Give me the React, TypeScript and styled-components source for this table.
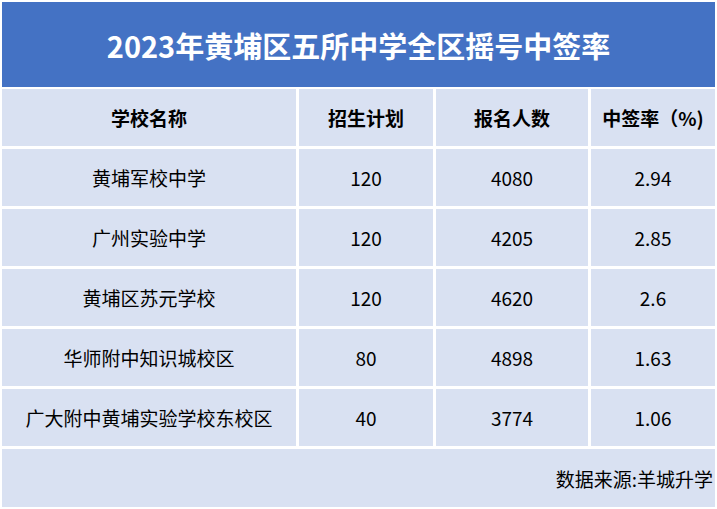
import * as React from "react"
import styled, { createGlobalStyle } from "styled-components"

const GlobalStyles = createGlobalStyle`
  html, body {
    margin: 0;
    padding: 0;
    background: #ffffff;
  }
  body {
    font-family: "Microsoft YaHei", "Noto Sans CJK SC", "Noto Sans", sans-serif;
  }
`

const Sheet = styled.main`
  width: 717px;
  height: 509px;
  box-sizing: border-box;
  padding: 2px;
  background: #ffffff;
  display: flex;
  flex-direction: column;
`

const Title = styled.h1`
  margin: 0 0 2px;
  height: 85px;
  background: #4472c4;
  color: #ffffff;
  font-size: 29px;
  font-weight: 700;
  display: flex;
  align-items: center;
  justify-content: center;
`

const Table = styled.section`
  display: grid;
  grid-template-columns: 294px 134px 152px 124px;
  grid-auto-rows: 57px;
  gap: 3px;
`

const Cell = styled.div<{ $head?: boolean }>`
  background: #d9e1f2;
  color: #000000;
  font-size: 19px;
  font-weight: ${(p) => (p.$head ? 700 : 400)};
  display: flex;
  align-items: center;
  justify-content: center;
`

const Footer = styled.div`
  grid-column: 1 / -1;
  height: 58px;
  background: #d9e1f2;
  color: #000000;
  font-size: 19px;
  display: flex;
  align-items: center;
  justify-content: flex-end;
  padding-right: 2px;
`

const headers = ["学校名称", "招生计划", "报名人数", "中签率（%)"]

const rows = [
  ["黄埔军校中学", "120", "4080", "2.94"],
  ["广州实验中学", "120", "4205", "2.85"],
  ["黄埔区苏元学校", "120", "4620", "2.6"],
  ["华师附中知识城校区", "80", "4898", "1.63"],
  ["广大附中黄埔实验学校东校区", "40", "3774", "1.06"],
]

const App: React.FC = () => {
  return (
    <Sheet>
      <GlobalStyles />
      <Title>2023年黄埔区五所中学全区摇号中签率</Title>
      <Table>
        {headers.map((h) => (
          <Cell key={h} $head>
            {h}
          </Cell>
        ))}
        {rows.map((r) =>
          r.map((v, i) => <Cell key={r[0] + i}>{v}</Cell>)
        )}
        <Footer>数据来源:羊城升学</Footer>
      </Table>
    </Sheet>
  )
}

export default App
